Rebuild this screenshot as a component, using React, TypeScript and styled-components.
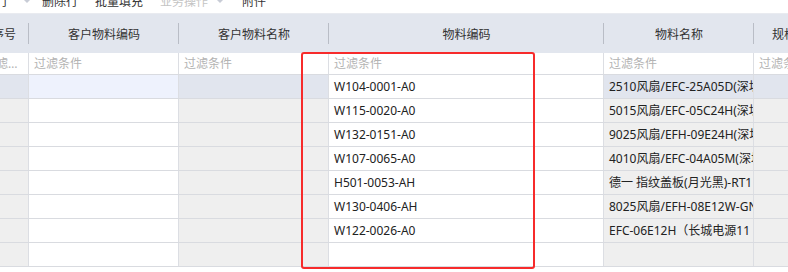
import React from "react";
import styled, { createGlobalStyle } from "styled-components";

const GlobalStyle = createGlobalStyle`
    html, body {
        margin: 0;
        padding: 0;
        background: #fff;
    }
    body {
        font-family: "Noto Sans", "Noto Sans CJK SC", sans-serif;
        font-size: 12px;
        color: #333;
    }
`;

interface Column {
    key: string;
    title: string;
    width: number;
    editable?: boolean;
}

const columns: Column[] = [
    {key: "seq", title: "序号", width: 50},
    {key: "custCode", title: "客户物料编码", width: 150, editable: true},
    {key: "custName", title: "客户物料名称", width: 150},
    {key: "code", title: "物料编码", width: 275, editable: true},
    {key: "name", title: "物料名称", width: 150},
    {key: "spec", title: "规格型号", width: 84},
];

const rows: Record<string, string>[] = [
    {code: "W104-0001-A0", name: "2510风扇/EFC-25A05D(深圳)"},
    {code: "W115-0020-A0", name: "5015风扇/EFC-05C24H(深圳)"},
    {code: "W132-0151-A0", name: "9025风扇/EFH-09E24H(深圳)"},
    {code: "W107-0065-A0", name: "4010风扇/EFC-04A05M(深圳)"},
    {code: "H501-0053-AH", name: "德一 指纹盖板(月光黑)-RT1"},
    {code: "W130-0406-AH", name: "8025风扇/EFH-08E12W-GN"},
    {code: "W122-0026-A0", name: "EFC-06E12H（长城电源11"},
    {},
];

const Page = styled.div`
    width: 788px;
    height: 272px;
    overflow: hidden;
    position: relative;
    background: #fff;
`;

const Toolbar = styled.div`
    display: flex;
    align-items: flex-end;
    height: 13px;
    padding-bottom: 5px;
    box-sizing: border-box;
    overflow: hidden;
`;

const ToolItem = styled.span<{ $disabled?: boolean; $left: number }>`
    line-height: 12px;
    white-space: nowrap;
    margin-left: ${p => p.$left}px;
    color: ${p => (p.$disabled ? "#c4c4c4" : "#333")};
`;

const Caret = styled.span<{ $left: number }>`
    margin-left: ${p => p.$left}px;
    width: 0;
    height: 0;
    align-self: center;
    margin-top: -6px;
    border-left: 3px solid transparent;
    border-right: 3px solid transparent;
    border-top: 3px solid #c8ccd6;
`;

const Grid = styled.div`
    margin-left: -21px;
    width: max-content;
`;

const HeaderRow = styled.div`
    display: flex;
    height: 39px;
    background: #e2e6ee;
    border-top: 1px solid #e9ebf0;
`;

const HeaderCell = styled.div<{ $w: number }>`
    width: ${p => p.$w}px;
    flex: none;
    display: flex;
    align-items: center;
    justify-content: center;
    position: relative;
    color: #333;
    white-space: nowrap;

    &::after {
        content: "";
        position: absolute;
        right: 0;
        top: 9px;
        bottom: 9px;
        width: 1px;
        background: #b9bdc6;
    }
`;

const FilterRow = styled.div`
    display: flex;
    height: 21px;
    border-bottom: 1px solid #d9dbe0;
    background: #fff;
`;

const FilterCell = styled.div<{ $w: number }>`
    width: ${p => p.$w}px;
    flex: none;
    box-sizing: border-box;
    border-right: 1px solid #dcdee3;
    padding-left: 5px;
    line-height: 21px;
    color: #b3b3b3;
    white-space: nowrap;
    overflow: hidden;
    text-overflow: ellipsis;
`;

const DataRow = styled.div`
    display: flex;
    height: 23px;
    border-bottom: 1px solid #d9dbe0;
`;

const Cell = styled.div<{ $w: number; $bg: string }>`
    width: ${p => p.$w}px;
    flex: none;
    box-sizing: border-box;
    border-right: 1px solid #dcdee3;
    background: ${p => p.$bg};
    padding-left: 5px;
    line-height: 23px;
    color: #222;
    white-space: nowrap;
    overflow: hidden;
`;

const Highlight = styled.div`
    position: absolute;
    left: 301px;
    top: 52px;
    width: 234px;
    height: 217px;
    box-sizing: border-box;
    border: 2.5px solid #f72b2b;
    border-radius: 3px;
    pointer-events: none;
`;

function cellBg(col: Column, active: boolean) {
    if (col.editable) {
        if (col.key === "custCode" && active) return "#eef2fd";
        return "#fff";
    }
    return active ? "#e1e5ee" : "#efefef";
}

export default function App() {
    return (
        <Page>
            <GlobalStyle/>
            <Toolbar>
                <ToolItem $left={-16}>增行</ToolItem>
                <Caret $left={16}/>
                <ToolItem $left={12}>删除行</ToolItem>
                <ToolItem $left={17}>批量填充</ToolItem>
                <ToolItem $left={17} $disabled>业务操作</ToolItem>
                <Caret $left={9}/>
                <ToolItem $left={19}>附件</ToolItem>
            </Toolbar>
            <Grid>
                <HeaderRow>
                    {columns.map(c => (
                        <HeaderCell key={c.key} $w={c.width}>{c.title}</HeaderCell>
                    ))}
                </HeaderRow>
                <FilterRow>
                    {columns.map(c => (
                        <FilterCell key={c.key} $w={c.width}>过滤条件</FilterCell>
                    ))}
                </FilterRow>
                {rows.map((r, i) => (
                    <DataRow key={i}>
                        {columns.map(c => (
                            <Cell key={c.key} $w={c.width} $bg={cellBg(c, i === 0)}>
                                {r[c.key] ?? ""}
                            </Cell>
                        ))}
                    </DataRow>
                ))}
            </Grid>
            <Highlight/>
        </Page>
    );
}
